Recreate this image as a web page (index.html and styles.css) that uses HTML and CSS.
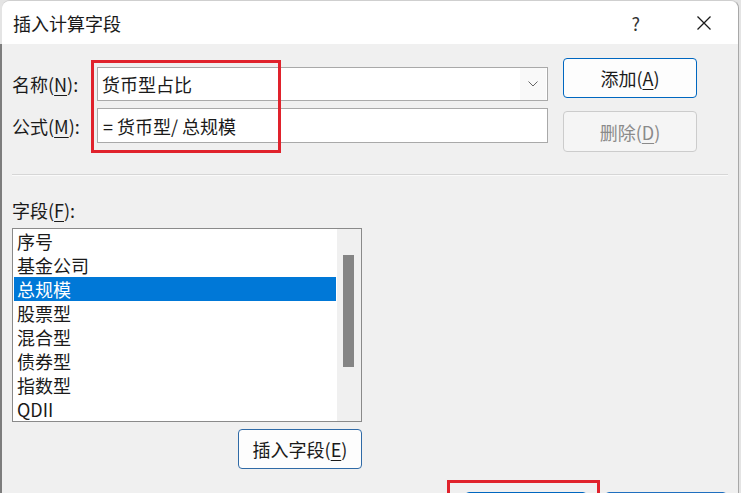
FILE: index.html
```html
<!DOCTYPE html>
<html lang="zh-CN">
<head>
    <meta charset="UTF-8">
    <meta name="viewport" content="width=device-width, initial-scale=1.0">
    <title>插入计算字段</title>
    <link rel="stylesheet" href="styles.css">
</head>
<body>
    <div class="dialog">
        <div class="titlebar">
            <span class="title">插入计算字段</span>
            <span class="help">?</span>
            <span class="close">
                <svg width="14" height="14" viewBox="0 0 14 14">
                    <path d="M0.5 0.5 L13.5 13.5 M13.5 0.5 L0.5 13.5" stroke="#1a1a1a" stroke-width="1.3" fill="none"/>
                </svg>
            </span>
        </div>

        <div class="content">
            <div class="top">
                <div class="fields">
                    <div class="row">
                        <label class="label">名称(<u>N</u>):</label>
                        <div class="combo">
                            <span class="value">货币型占比</span>
                            <span class="arrow">
                                <svg width="10" height="6" viewBox="0 0 10 6">
                                    <path d="M0.5 0.5 L5 5 L9.5 0.5" stroke="#666" stroke-width="1" fill="none"/>
                                </svg>
                            </span>
                        </div>
                    </div>
                    <div class="row row-second">
                        <label class="label">公式(<u>M</u>):</label>
                        <div class="input">= 货币型/ 总规模</div>
                    </div>
                </div>
                <div class="side">
                    <button class="btn btn-default">添加(<u>A</u>)</button>
                    <button class="btn btn-disabled" disabled>删除(<u>D</u>)</button>
                </div>
            </div>

            <div class="sep"></div>

            <div class="field-section">
                <label class="label field-label">字段(<u>F</u>):</label>
                <div class="listbox">
                    <ul class="items">
                        <li>序号</li>
                        <li>基金公司</li>
                        <li class="selected">总规模</li>
                        <li>股票型</li>
                        <li>混合型</li>
                        <li>债券型</li>
                        <li>指数型</li>
                        <li>QDII</li>
                    </ul>
                    <div class="scrollbar"><div class="thumb"></div></div>
                </div>
                <button class="btn btn-insert">插入字段(<u>E</u>)</button>
            </div>

            <!-- bottom buttons are cut off by the screenshot edge -->
            <div class="footer">
                <button class="btn btn-default btn-footer"></button>
                <button class="btn btn-footer btn-cancel"></button>
            </div>
        </div>

        <div class="mark mark-top"></div>
        <div class="mark mark-bottom"></div>
    </div>
</body>
</html>
```

FILE: styles.css
```css
html, body {
    margin: 0;
    padding: 0;
    width: 741px;
    height: 493px;
    overflow: hidden;
}
body {
    background-color: #e4e4e4;
    font-family: "Noto Sans CJK SC", "Noto Sans", sans-serif;
    font-size: 18px;
    color: #1a1a1a;
}
.dialog {
    position: relative;
    margin-left: 2px;
    width: 736px;
    height: 540px;
    border-right: 1px solid #a8a8a8;
    border-top: 1px solid #cfcfcf;
    border-radius: 8px 8px 0 0;
    background: #f0f0f0;
}
.titlebar {
    display: flex;
    align-items: center;
    height: 43px;
    background: #ffffff;
    border-radius: 8px 8px 0 0;
    padding-left: 11px;
}
.title {
    flex: 1;
    line-height: 24px;
}
.help {
    margin-right: 57px;
    color: #333;
    font-size: 18px;
    line-height: 24px;
}
.close {
    display: flex;
    margin-right: 27px;
}
.content {
    padding: 0 10px 0 10px;
    box-shadow: -2px 0 0 #7d7d7d;
}
.top {
    display: flex;
}
.fields {
    margin-top: 23px;
}
.row {
    display: flex;
    align-items: center;
    height: 34px;
}
.row-second {
    margin-top: 7px;
    height: 35px;
}
.label {
    display: block;
    width: 85px;
    line-height: 24px;
}
u {
    text-decoration-thickness: 1px;
    text-underline-offset: 3px;
}
.combo, .input {
    box-sizing: border-box;
    display: flex;
    align-items: center;
    width: 451px;
    height: 100%;
    background: #ffffff;
    border: 1px solid #a9a9a9;
}
.combo .value {
    flex: 1;
    padding-left: 4px;
}
.arrow {
    display: flex;
    align-items: center;
    justify-content: center;
    width: 26px;
    height: 100%;
    background: #f9f9f9;
    margin-right: 1px;
}
.input {
    padding-left: 5px;
}
.side {
    display: flex;
    flex-direction: column;
    margin-top: 14px;
    margin-left: 15px;
}
.btn {
    box-sizing: border-box;
    width: 134px;
    height: 40px;
    padding: 0;
    background: #fdfdfd;
    border: 1px solid #d0d0d0;
    border-radius: 4px;
    font-family: inherit;
    font-size: 18px;
    color: #1a1a1a;
}
.btn-default {
    border-color: #0067c0;
}
.btn-disabled {
    margin-top: 13px;
    height: 41px;
    background: #f5f5f5;
    border-color: #cccccc;
    color: #8a8a8a;
}
.sep {
    margin-top: 22px;
    width: 716px;
    height: 1px;
    background: #d6d6d6;
    border-bottom: 1px solid #fafafa;
}
.field-section {
    display: flex;
    flex-direction: column;
    width: 350px;
}
.field-label {
    margin-top: 22px;
}
.listbox {
    display: flex;
    margin-top: 6px;
    height: 192px;
    background: #ffffff;
    border: 1px solid #8a8a8a;
}
.items {
    list-style: none;
    margin: 0;
    padding: 0 0 0 1px;
    width: 322px;
}
.items li {
    height: 24px;
    line-height: 24px;
    padding-left: 3px;
}
.items li.selected {
    background: #0078d7;
    color: #ffffff;
}
.scrollbar {
    flex: 1;
    margin-left: 1px;
    background: #f0f0f0;
}
.thumb {
    margin: 26px 0 0 6px;
    width: 11px;
    height: 112px;
    background: #858585;
}
.btn-insert {
    align-self: flex-end;
    margin-top: 7px;
    width: 124px;
    border-color: #2f6aa6;
}
.footer {
    display: flex;
    justify-content: flex-end;
    gap: 18px;
    margin-top: 23px;
    padding-right: 1px;
}
.btn-footer {
    width: 122px;
}
.btn-cancel {
    border-color: #1f6fbf;
}
.mark {
    position: absolute;
    border: 3px solid #e0222c;
}
.mark-top {
    left: 89px;
    top: 59px;
    width: 184px;
    height: 87px;
}
.mark-bottom {
    left: 445px;
    top: 479px;
    width: 147px;
    height: 40px;
}
```
